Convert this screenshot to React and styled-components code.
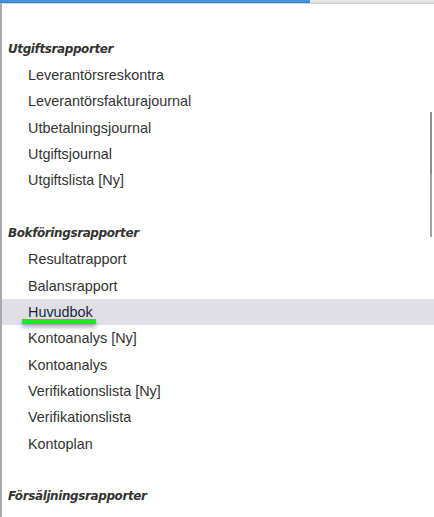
import React from 'react';
import styled, { createGlobalStyle } from 'styled-components';

const GlobalStyle = createGlobalStyle`
  html, body {
    margin: 0;
    padding: 0;
    background: #ffffff;
    overflow: hidden;
  }
`;

const ROW = '26.35px';

const Page = styled.div`
  width: 434px;
  height: 517px;
  overflow: hidden;
  display: flex;
  flex-direction: column;
  font-family: "Liberation Sans", Arial, sans-serif;
`;

const TopStrip = styled.div`
  display: flex;
  height: 3px;
  background: linear-gradient(#ececec, #dcdcdc);
`;

const SearchEdge = styled.div`
  width: 310px;
  background: #4a92d4;
  border-bottom: 1px solid #3a7fc0;
  box-sizing: border-box;
`;

const Panel = styled.div`
  position: relative;
  flex: 1;
  border-top: 1px solid #d4d4d4;
  border-left: 2px solid #a8a8a8;
  padding: 31.5px 0 0 0;
  display: flex;
  flex-direction: column;
  gap: ${ROW};
`;

const Section = styled.div`
  display: flex;
  flex-direction: column;
`;

const Heading = styled.div`
  height: ${ROW};
  line-height: ${ROW};
  padding-left: 6px;
  font-family: "DejaVu Sans", Verdana, sans-serif;
  font-size: 12px;
  font-weight: bold;
  font-style: italic;
  color: #333333;
  letter-spacing: -0.4px;
`;

const Item = styled.div`
  position: relative;
  height: ${ROW};
  line-height: ${ROW};
  padding-left: 26px;
  font-size: 14.4px;
  color: ${p => (p.$active ? '#1f1f3a' : '#333333')};
  background: ${p => (p.$active ? '#e0dfe5' : 'transparent')};
`;

const Marker = styled.span`
  position: absolute;
  left: 20px;
  top: 20px;
  width: 74px;
  height: 5px;
  background: #1ee81e;
  box-shadow: 0 3px 4px rgba(0, 0, 0, 0.35);
`;

const Scrollbar = styled.div`
  position: absolute;
  right: 2px;
  top: 108px;
  width: 2px;
  height: 125px;
  background: linear-gradient(#8e8e8e 0%, #8e8e8e 50%, #a4a4a4 50%, #a4a4a4 100%);
`;

const sections = [
  {
    title: 'Utgiftsrapporter',
    items: [
      'Leverantörsreskontra',
      'Leverantörsfakturajournal',
      'Utbetalningsjournal',
      'Utgiftsjournal',
      'Utgiftslista [Ny]',
    ],
  },
  {
    title: 'Bokföringsrapporter',
    items: [
      'Resultatrapport',
      'Balansrapport',
      'Huvudbok',
      'Kontoanalys [Ny]',
      'Kontoanalys',
      'Verifikationslista [Ny]',
      'Verifikationslista',
      'Kontoplan',
    ],
  },
  {
    title: 'Försäljningsrapporter',
    items: [],
  },
];

export default function App() {
  return (
    <Page>
      <GlobalStyle />
      <TopStrip>
        <SearchEdge />
      </TopStrip>
      <Panel>
        {sections.map(section => (
          <Section key={section.title}>
            <Heading>{section.title}</Heading>
            {section.items.map(item => (
              <Item key={item} $active={item === 'Huvudbok'}>
                {item}
                {item === 'Huvudbok' && <Marker />}
              </Item>
            ))}
          </Section>
        ))}
        <Scrollbar />
      </Panel>
    </Page>
  );
}
